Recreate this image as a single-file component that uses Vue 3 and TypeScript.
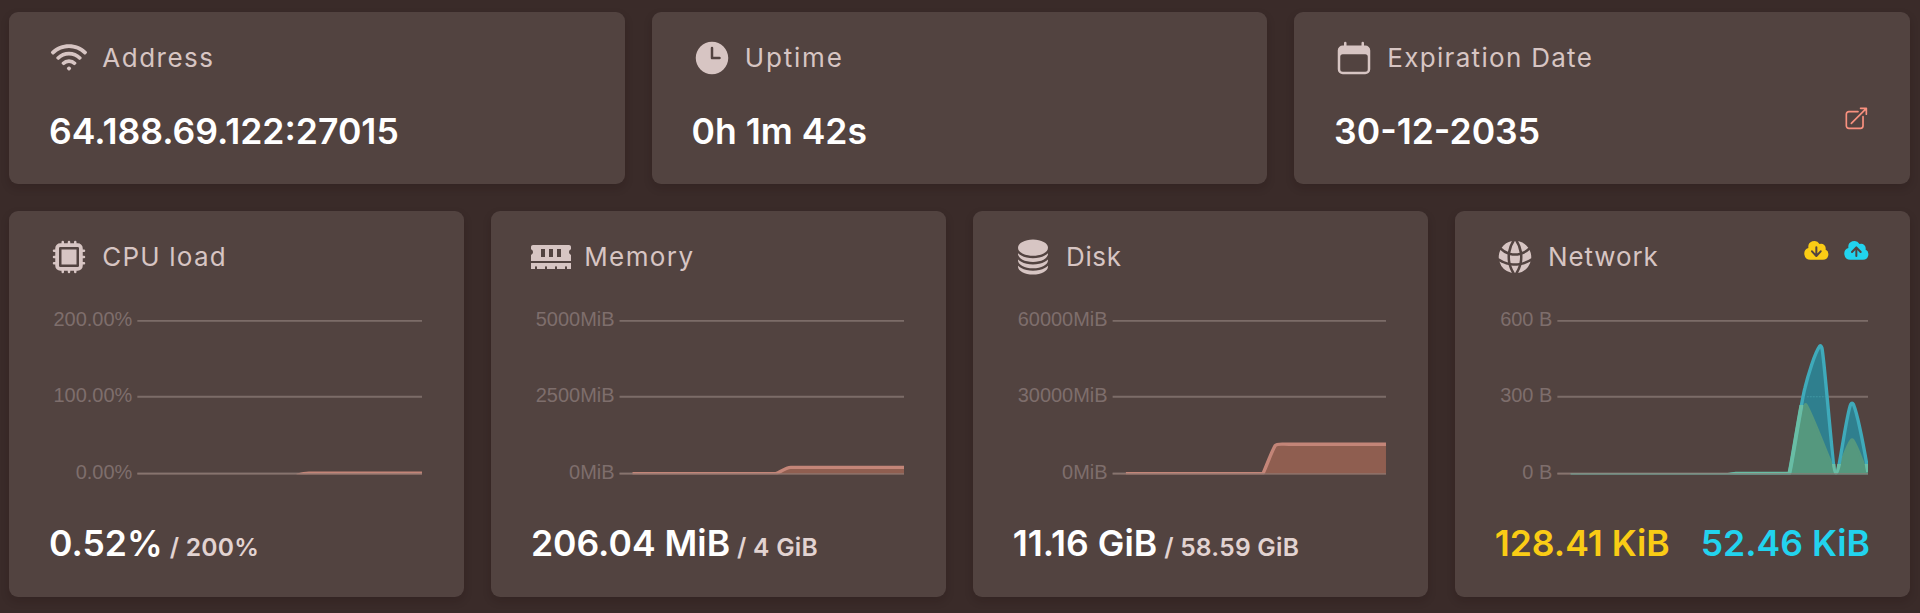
<script setup lang="ts">
interface Summary {
  title: string
  icon: string
  value: string
  spacing: number
  link?: boolean
}

interface Metric {
  id: string
  title: string
  icon: string
  spacing: number
  value: string
  limit?: string
  labels: string[]
  gridStart: number
  line?: string
}

const icons: Record<string, { box: string; paths: string[] }> = {
  wifi: {
    box: '0 0 24 24',
    paths: [
      'M1.371 8.143c5.858-5.857 15.356-5.857 21.213 0a.75.75 0 0 1 0 1.061l-.53.53a.75.75 0 0 1-1.06 0c-4.98-4.979-13.053-4.979-18.032 0a.75.75 0 0 1-1.06 0l-.53-.53a.75.75 0 0 1 0-1.06Zm3.182 3.182c4.1-4.1 10.749-4.1 14.85 0a.75.75 0 0 1 0 1.061l-.53.53a.75.75 0 0 1-1.062 0 8.25 8.25 0 0 0-11.667 0 .75.75 0 0 1-1.06 0l-.53-.53a.75.75 0 0 1 0-1.06Zm3.204 3.182a6 6 0 0 1 8.486 0 .75.75 0 0 1 0 1.061l-.53.53a.75.75 0 0 1-1.061 0 3.75 3.75 0 0 0-5.304 0 .75.75 0 0 1-1.06 0l-.53-.53a.75.75 0 0 1 0-1.06Zm3.182 3.182a1.5 1.5 0 0 1 2.122 0 .75.75 0 0 1 0 1.061l-.53.53a.75.75 0 0 1-1.061 0l-.53-.53a.75.75 0 0 1 0-1.06Z',
    ],
  },
  clock: {
    box: '0 0 24 24',
    paths: [
      'M12 2.25c-5.385 0-9.75 4.365-9.75 9.75s4.365 9.75 9.75 9.75 9.75-4.365 9.75-9.75S17.385 2.25 12 2.25ZM12.75 6a.75.75 0 0 0-1.5 0v6c0 .414.336.75.75.75h4.5a.75.75 0 0 0 0-1.5h-3.75V6Z',
    ],
  },
  calendar: {
    box: '0 0 24 24',
    paths: [
      'M6.75 2.25A.75.75 0 0 1 7.5 3v1.5h9V3A.75.75 0 0 1 18 3v1.5h.75a3 3 0 0 1 3 3v11.25a3 3 0 0 1-3 3H5.25a3 3 0 0 1-3-3V7.5a3 3 0 0 1 3-3H6V3a.75.75 0 0 1 .75-.75Zm13.5 9a1.5 1.5 0 0 0-1.5-1.5H5.25a1.5 1.5 0 0 0-1.5 1.5v7.5a1.5 1.5 0 0 0 1.5 1.5h13.5a1.5 1.5 0 0 0 1.5-1.5v-7.5Z',
    ],
  },
  cpu: {
    box: '0 0 24 24',
    paths: [
      'M16.5 7.5h-9v9h9v-9Z',
      'M8.25 2.25A.75.75 0 0 1 9 3v.75h2.25V3a.75.75 0 0 1 1.5 0v.75H15V3a.75.75 0 0 1 1.5 0v.75h.75a3 3 0 0 1 3 3v.75H21A.75.75 0 0 1 21 9h-.75v2.25H21a.75.75 0 0 1 0 1.5h-.75V15H21a.75.75 0 0 1 0 1.5h-.75v.75a3 3 0 0 1-3 3h-.75V21a.75.75 0 0 1-1.5 0v-.75h-2.25V21a.75.75 0 0 1-1.5 0v-.75H9V21a.75.75 0 0 1-1.5 0v-.75h-.75a3 3 0 0 1-3-3v-.75H3A.75.75 0 0 1 3 15h.75v-2.25H3a.75.75 0 0 1 0-1.5h.75V9H3a.75.75 0 0 1 0-1.5h.75v-.75a3 3 0 0 1 3-3h.75V3a.75.75 0 0 1 .75-.75ZM6 6.75A.75.75 0 0 1 6.75 6h10.5a.75.75 0 0 1 .75.75v10.5a.75.75 0 0 1-.75.75H6.75a.75.75 0 0 1-.75-.75V6.75Z',
    ],
  },
  memory: {
    box: '0 -64 640 640',
    paths: [
      'M640 130.94V96c0-17.67-14.33-32-32-32H32C14.33 64 0 78.33 0 96v34.94c18.6 6.61 32 24.19 32 45.06s-13.4 38.45-32 45.06V320h640v-98.94c-18.6-6.61-32-24.19-32-45.06s13.4-38.45 32-45.06zM224 256h-64V128h64v128zm128 0h-64V128h64v128zm128 0h-64V128h64v128zM0 448h64v-26.67c0-8.84 7.16-16 16-16s16 7.16 16 16V448h128v-26.67c0-8.84 7.16-16 16-16s16 7.16 16 16V448h128v-26.67c0-8.84 7.16-16 16-16s16 7.16 16 16V448h128v-26.67c0-8.84 7.16-16 16-16s16 7.16 16 16V448h64v-96H0v96z',
    ],
  },
  disk: {
    box: '0 0 24 24',
    paths: [
      'M21 6.375c0 2.692-4.03 4.875-9 4.875S3 9.067 3 6.375 7.03 1.5 12 1.5s9 2.183 9 4.875Z',
      'M12 12.75c2.685 0 5.19-.586 7.078-1.609a8.283 8.283 0 0 0 1.897-1.384c.016.121.025.244.025.368C21 12.817 16.97 15 12 15s-9-2.183-9-4.875c0-.124.009-.247.025-.368a8.285 8.285 0 0 0 1.897 1.384C6.809 12.164 9.315 12.75 12 12.75Z',
      'M12 16.5c2.685 0 5.19-.586 7.078-1.609a8.282 8.282 0 0 0 1.897-1.384c.016.121.025.244.025.368 0 2.692-4.03 4.875-9 4.875s-9-2.183-9-4.875c0-.124.009-.247.025-.368a8.284 8.284 0 0 0 1.897 1.384C6.809 15.914 9.315 16.5 12 16.5Z',
      'M12 20.25c2.685 0 5.19-.586 7.078-1.609a8.282 8.282 0 0 0 1.897-1.384c.016.121.025.244.025.368 0 2.692-4.03 4.875-9 4.875s-9-2.183-9-4.875c0-.124.009-.247.025-.368a8.284 8.284 0 0 0 1.897 1.384C6.809 19.664 9.315 20.25 12 20.25Z',
    ],
  },
  globe: {
    box: '0 0 24 24',
    paths: [
      'M21.721 12.752a9.711 9.711 0 0 0-.945-5.003 12.754 12.754 0 0 1-4.339 2.708 18.991 18.991 0 0 1-.214 4.772 17.165 17.165 0 0 0 5.498-2.477ZM14.634 15.55a17.324 17.324 0 0 0 .332-4.647c-.952.227-1.945.347-2.966.347-1.021 0-2.014-.12-2.966-.347a17.515 17.515 0 0 0 .332 4.647 17.385 17.385 0 0 0 5.268 0ZM9.772 17.119a18.963 18.963 0 0 0 4.456 0A17.182 17.182 0 0 1 12 21.724a17.18 17.18 0 0 1-2.228-4.605ZM7.777 15.23a18.87 18.87 0 0 1-.214-4.774 12.753 12.753 0 0 1-4.34-2.708 9.711 9.711 0 0 0-.944 5.004 17.165 17.165 0 0 0 5.498 2.477ZM21.356 14.752a9.765 9.765 0 0 1-7.478 6.817 18.64 18.64 0 0 0 1.988-4.718 18.627 18.627 0 0 0 5.49-2.098ZM2.644 14.752c1.682.971 3.53 1.688 5.49 2.099a18.64 18.64 0 0 0 1.988 4.718 9.765 9.765 0 0 1-7.478-6.816ZM13.878 2.43a9.755 9.755 0 0 1 6.116 3.986 11.267 11.267 0 0 1-3.746 2.504 18.63 18.63 0 0 0-2.37-6.49ZM12 2.276a17.152 17.152 0 0 1 2.805 7.121c-.897.23-1.837.353-2.805.353-.968 0-1.908-.122-2.805-.353A17.151 17.151 0 0 1 12 2.276ZM10.122 2.43a18.629 18.629 0 0 0-2.37 6.49 11.266 11.266 0 0 1-3.746-2.504 9.754 9.754 0 0 1 6.116-3.985Z',
    ],
  },
}

const summaries: Summary[] = [
  { title: 'Address', icon: 'wifi', value: '64.188.69.122:27015', spacing: 1.5 },
  { title: 'Uptime', icon: 'clock', value: '0h 1m 42s', spacing: 1.8 },
  { title: 'Expiration Date', icon: 'calendar', value: '30-12-2035', spacing: 1.3, link: true },
]

const gridLines = [43.8, 119.8, 196.5]
const gridEnd = 373.3

const metrics: Metric[] = [
  {
    id: 'cpu', title: 'CPU load', icon: 'cpu', spacing: 1.2, value: '0.52%', limit: '/ 200%',
    labels: ['200.00%', '100.00%', '0.00%'], gridStart: 88.4,
    line: 'M248 198.5C253 197 256 196.2 260 196.2H373.3',
  },
  {
    id: 'memory', title: 'Memory', icon: 'memory', spacing: 1.4, value: '206.04 MiB', limit: '/ 4 GiB',
    labels: ['5000MiB', '2500MiB', '0MiB'], gridStart: 88.6,
    line: 'M101.6 196.8H245C248 196 255 190.4 260 190.4H373.3',
  },
  {
    id: 'disk', title: 'Disk', icon: 'disk', spacing: 0.6, value: '11.16 GiB', limit: '/ 58.59 GiB',
    labels: ['60000MiB', '30000MiB', '0MiB'], gridStart: 99.7,
    line: 'M113 196.8H250C251 196 259 174 262.5 168.5C264 166.4 269 167.3 276 167.3H373.3',
  },
  {
    id: 'network', title: 'Network', icon: 'globe', spacing: 0.9, value: '128.41 KiB',
    labels: ['600 B', '300 B', '0 B'], gridStart: 62.4,
  },
]

const outbound =
  'M75.7 198H233L241 196.8H294.4C296 194 306.5 124 310.2 111C313 99 320 76 324.9 69.3Q326 67.4 327.2 71C330 84 338 196 341.3 196C344.7 196 351.5 137 356 127.4Q357.3 125 358.7 127.4C363 138 370.5 178 373.4 195'
const inbound =
  'M75.7 198H233L241 196.8H294.4C296 194 306.5 138 309.8 128.4Q310.6 126 312 128C320 142 334 182 341.3 196C345 191 351 169 356 163.2Q357.3 161.4 358.7 163.2C364 171 370 191 373.4 196'
</script>

<template>
  <main class="page">
    <section class="row summary-row">
      <article v-for="item in summaries" :key="item.title" class="card">
        <header class="head">
          <svg class="icon" :viewBox="icons[item.icon].box">
            <path v-for="d in icons[item.icon].paths" :key="d" :d="d" />
          </svg>
          <h2 class="title" :style="{ letterSpacing: item.spacing + 'px' }">{{ item.title }}</h2>
        </header>
        <div class="summary-body">
          <span class="value">{{ item.value }}</span>
          <a v-if="item.link" class="link">
            <svg class="small-icon" viewBox="0 0 24 24">
              <path d="M13.5 6H5.25A2.25 2.25 0 0 0 3 8.25v10.5A2.25 2.25 0 0 0 5.25 21h10.5A2.25 2.25 0 0 0 18 18.75V10.5m-10.5 6L21 3m0 0h-5.25M21 3v5.25" />
            </svg>
          </a>
        </div>
      </article>
    </section>

    <section class="row metric-row">
      <article v-for="item in metrics" :key="item.id" class="card">
        <header class="head">
          <svg class="icon" :viewBox="icons[item.icon].box">
            <path v-for="d in icons[item.icon].paths" :key="d" :d="d" />
          </svg>
          <h2 class="title" :style="{ letterSpacing: item.spacing + 'px' }">{{ item.title }}</h2>
          <div v-if="item.id === 'network'" class="legend">
            <svg class="small-icon down" viewBox="0 0 20 20">
              <path d="M5.5 17a4.5 4.5 0 0 1-1.44-8.765 4.5 4.5 0 0 1 8.302-3.046 3.5 3.5 0 0 1 4.504 4.272A4 4 0 0 1 15 17H5.5Zm5.25-9.25a.75.75 0 0 0-1.5 0v4.59l-1.95-2.1a.75.75 0 1 0-1.1 1.02l3.25 3.5a.75.75 0 0 0 1.1 0l3.25-3.5a.75.75 0 1 0-1.1-1.02l-1.95 2.1V7.75Z" />
            </svg>
            <svg class="small-icon up" viewBox="0 0 20 20">
              <path d="M5.5 17a4.5 4.5 0 0 1-1.44-8.765 4.5 4.5 0 0 1 8.302-3.046 3.5 3.5 0 0 1 4.504 4.272A4 4 0 0 1 15 17H5.5Zm3.75-2.75a.75.75 0 0 0 1.5 0V9.66l1.95 2.1a.75.75 0 1 0 1.1-1.02l-3.25-3.5a.75.75 0 0 0-1.1 0l-3.25 3.5a.75.75 0 1 0 1.1 1.02l1.95-2.1v4.59Z" />
            </svg>
          </div>
        </header>

        <svg class="chart" viewBox="0 0 375.6 220">
          <defs>
            <clipPath :id="'area-' + item.id">
              <rect :x="item.gridStart" y="0" :width="gridEnd - item.gridStart" height="197.3" />
            </clipPath>
            <clipPath id="inbound-area">
              <path d="M70 128H311V198H70ZM334 187H376V198H334Z" />
            </clipPath>
          </defs>
          <text v-for="(label, i) in item.labels" :key="label" class="tick" :x="item.gridStart - 5" :y="gridLines[i] + 5.4">{{ label }}</text>
          <line v-for="y in gridLines" :key="y" class="grid" :x1="item.gridStart" :x2="gridEnd" :y1="y" :y2="y" />
          <g v-if="item.line" :clip-path="`url(#area-${item.id})`">
            <path class="usage-area" :d="item.line + 'V199H101Z'" />
            <path class="usage-line" :d="item.line" />
          </g>
          <g v-else :clip-path="`url(#area-${item.id})`">
            <path class="out-area" :d="outbound + 'V198H75.7Z'" />
            <line class="grid-through" x1="312" x2="332" y1="119.8" y2="119.8" />
            <path class="in-area" :d="inbound + 'V198H75.7Z'" />
            <path class="out-line" :d="outbound" />
            <g clip-path="url(#inbound-area)">
              <path class="overlap-line" :d="outbound" />
            </g>
          </g>
          <line class="baseline" :x1="item.gridStart" :x2="gridEnd" y1="196.9" y2="196.9" />
        </svg>

        <div v-if="item.limit" class="reading">
          <span class="value">{{ item.value }}</span>
          <span class="limit">{{ item.limit }}</span>
        </div>
        <div v-else class="reading traffic">
          <span class="value down">{{ item.value }}</span>
          <span class="value up">52.46 KiB</span>
        </div>
      </article>
    </section>
  </main>
</template>

<style>
body {
  margin: 0;
  background: #3a2b29;
}
</style>

<style scoped>
.page {
  box-sizing: border-box;
  height: 613px;
  padding: 11.8px 10px 0 9px;
  display: flex;
  flex-direction: column;
  gap: 27.2px;
  overflow: hidden;
  background: #3a2b29;
  font-family: Inter, "Liberation Sans", sans-serif;
}
.row {
  display: grid;
  gap: 26.6px;
}
.summary-row {
  grid-template-columns: repeat(3, 1fr);
  height: 171.8px;
}
.metric-row {
  grid-template-columns: repeat(4, 1fr);
  height: 385.8px;
}
.card {
  box-sizing: border-box;
  min-width: 0;
  padding: 26.7px 40px 0;
  border-radius: 9px;
  background: #524340;
  box-shadow: 0 4px 8px rgba(25, 12, 10, 0.18);
}
.head {
  display: flex;
  align-items: center;
  gap: 13.3px;
  height: 40px;
}
.icon {
  width: 40px;
  height: 40px;
  flex: none;
  fill: #d7c5c3;
  fill-rule: evenodd;
}
.title {
  margin: 0;
  font-size: 26px;
  font-weight: 400;
  line-height: 40px;
  white-space: nowrap;
  color: #d7c5c3;
}
.small-icon {
  display: block;
  width: 26.7px;
  height: 26.7px;
}
.legend {
  display: flex;
  gap: 13.3px;
  align-self: flex-start;
  margin-left: auto;
}
.summary-body {
  display: flex;
  justify-content: space-between;
  padding-top: 26.4px;
}
.value {
  font-size: 35.55px;
  font-weight: 600;
  line-height: 53px;
  white-space: nowrap;
  color: #fff;
}
.link .small-icon {
  fill: none;
  stroke: #f9917f;
  stroke-width: 1.5;
  stroke-linecap: round;
  stroke-linejoin: round;
}
.chart {
  display: block;
  width: 100%;
  height: 220px;
  overflow: visible;
}
.tick {
  font-family: "Liberation Sans", Arial, sans-serif;
  font-size: 20px;
  text-anchor: end;
  fill: #7e6e6c;
}
.grid {
  stroke: #7c6c68;
  stroke-width: 1.9;
}
.baseline {
  stroke: #8d7872;
  stroke-width: 1;
}
.grid-through {
  stroke: #4199a4;
  stroke-width: 1;
  stroke-dasharray: 2 1;
}
.usage-area {
  fill: #8f5e50;
}
.usage-line {
  fill: none;
  stroke: #c38578;
  stroke-width: 3.4;
  stroke-linejoin: round;
}
.out-area {
  fill: #2f7f8e;
}
.in-area {
  fill: #55987e;
  stroke: #55987e;
  stroke-width: 2;
}
.out-line {
  fill: none;
  stroke: #3faaba;
  stroke-width: 3.4;
}
.overlap-line {
  fill: none;
  stroke: #69bda4;
  stroke-width: 4;
}
.reading {
  display: flex;
  align-items: baseline;
  gap: 7px;
  padding-top: 19.8px;
  white-space: nowrap;
}
.traffic {
  justify-content: space-between;
}
.limit {
  font-size: 24.6px;
  letter-spacing: 0.25px;
  font-weight: 600;
  color: #e2d3d1;
}
.reading .down {
  color: #facc15;
}
.reading .up {
  color: #22d3ee;
}
.legend .down {
  fill: #facc15;
}
.legend .up {
  fill: #22d3ee;
}
</style>
